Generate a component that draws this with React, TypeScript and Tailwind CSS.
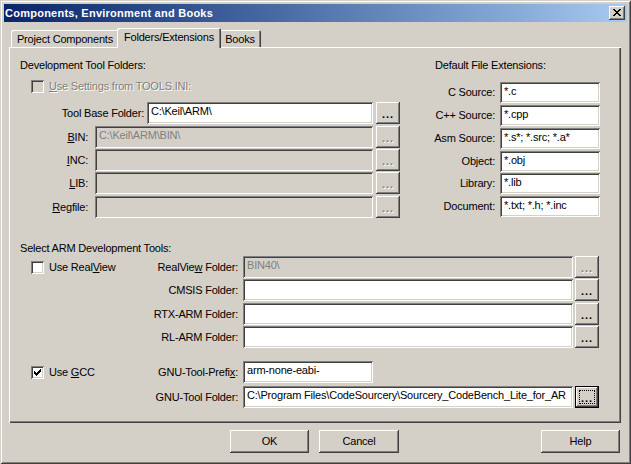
import React from "react";

const font = "[font-family:'Liberation_Sans',Arial,sans-serif]";
const raised =
  "shadow-[inset_-1px_-1px_#404040,inset_1px_1px_#ffffff,inset_-2px_-2px_#808080,inset_2px_2px_#d4d0c8]";
const sunken =
  "shadow-[inset_1px_1px_#808080,inset_-1px_-1px_#ffffff,inset_2px_2px_#404040,inset_-2px_-2px_#d4d0c8]";
const etched = "text-[#808080] [text-shadow:1px_1px_0_#ffffff]";

type FieldProps = { value?: string; disabled?: boolean; className: string };

function Field({ value = "", disabled = false, className }: FieldProps) {
  return (
    <div
      className={`${className} ${sunken} ${
        disabled ? "bg-[#d4d0c8] text-[#808080]" : "bg-white text-black"
      } pl-[4px] pt-[3px] leading-[13px] overflow-hidden whitespace-nowrap`}
    >
      {value}
    </div>
  );
}

function Browse({
  className,
  disabled = false,
  focused = false,
}: {
  className: string;
  disabled?: boolean;
  focused?: boolean;
}) {
  const frame = focused
    ? "shadow-[inset_0_0_0_1px_#000000,inset_-2px_-2px_#404040,inset_2px_2px_#ffffff,inset_-3px_-3px_#808080]"
    : raised;
  return (
    <div
      className={`${className} relative w-[24px] h-[22px] bg-[#d4d0c8] ${frame} flex justify-center pt-[6px]`}
    >
      <span
        className={`font-bold text-[11px] leading-[13px] tracking-[1px] ${
          disabled ? etched : "text-black"
        }`}
      >
        ...
      </span>
      {focused && (
        <div className="absolute inset-[4px] border border-dotted border-black" />
      )}
    </div>
  );
}

function Check({ checked = false, disabled = false }: { checked?: boolean; disabled?: boolean }) {
  return (
    <div
      className={`w-[13px] h-[13px] shrink-0 ${sunken} ${
        disabled ? "bg-[#d4d0c8]" : "bg-white"
      } flex items-center justify-center`}
    >
      {checked && (
        <svg width="7" height="7" viewBox="0 0 7 7" shapeRendering="crispEdges">
          <path
            d="M6 0h1v1H6zM5 1h2v1H5zM0 2h1v1H0zM4 2h3v1H4zM0 3h2v1H0zM3 3h3v1H3zM0 4h5v1H0zM1 5h3v1H1zM2 6h1v1H2z"
            fill="#000"
          />
        </svg>
      )}
    </div>
  );
}

function Button({ className, children }: { className: string; children: React.ReactNode }) {
  return (
    <div
      className={`${className} h-[23px] bg-[#d4d0c8] ${raised} flex items-center justify-center`}
    >
      {children}
    </div>
  );
}

const toolRows = [
  {
    label: <>Tool Base Folder:</>,
    value: "C:\\Keil\\ARM\\",
    labelW: "w-[135px]",
    input: "ml-[3px] w-[226px]",
    mt: "mt-[9px]",
    on: true,
  },
  {
    label: (
      <>
        <u>B</u>IN:
      </>
    ),
    value: "C:\\Keil\\ARM\\BIN\\",
    labelW: "w-[79px]",
    input: "ml-[7px] w-[278px]",
    mt: "mt-[2px]",
    on: false,
  },
  {
    label: (
      <>
        <u>I</u>NC:
      </>
    ),
    value: "",
    labelW: "w-[79px]",
    input: "ml-[7px] w-[278px]",
    mt: "mt-[1px]",
    on: false,
  },
  {
    label: (
      <>
        <u>L</u>IB:
      </>
    ),
    value: "",
    labelW: "w-[79px]",
    input: "ml-[7px] w-[278px]",
    mt: "mt-[1px]",
    on: false,
  },
  {
    label: (
      <>
        <u>R</u>egfile:
      </>
    ),
    value: "",
    labelW: "w-[79px]",
    input: "ml-[7px] w-[278px]",
    mt: "mt-[2px]",
    on: false,
  },
];

const extRows = [
  { label: "C Source:", value: "*.c", mt: "mt-[10px]" },
  { label: "C++ Source:", value: "*.cpp", mt: "mt-[2px]" },
  { label: "Asm Source:", value: "*.s*; *.src; *.a*", mt: "mt-[2px]" },
  { label: "Object:", value: "*.obj", mt: "mt-[2px]" },
  { label: "Library:", value: "*.lib", mt: "mt-[1px]" },
  { label: "Document:", value: "*.txt; *.h; *.inc", mt: "mt-[2px]" },
];

const armRows = [
  {
    check: (
      <>
        Use Real<u>V</u>iew
      </>
    ),
    label: (
      <>
        RealVie<u>w</u> Folder:
      </>
    ),
    value: "BIN40\\",
    disabled: true,
    mt: "mt-[1px]",
  },
  { check: null, label: <>CMSIS Folder:</>, value: "", disabled: false, mt: "mt-[1px]" },
  { check: null, label: <>RTX-ARM Folder:</>, value: "", disabled: false, mt: "mt-[2px]" },
  { check: null, label: <>RL-ARM Folder:</>, value: "", disabled: false, mt: "mt-[1px]" },
];

export default function App() {
  return (
    <div
      className={`w-[631px] h-[464px] bg-[#d4d0c8] ${font} text-[11px] leading-[13px] tracking-[-0.2px] text-black shadow-[inset_1px_1px_#d4d0c8,inset_-1px_-1px_#404040,inset_2px_2px_#ffffff,inset_-2px_-2px_#808080] flex flex-col overflow-hidden select-none`}
    >
      {/* title bar */}
      <div className="mt-[4px] ml-[4px] w-[623px] h-[18px] shrink-0 bg-linear-to-r from-[#0a246a] to-[#a6caf0] flex items-start">
        <span className="ml-[1px] text-white font-bold text-[11px] leading-[18px] tracking-[0.25px]">
          Components, Environment and Books
        </span>
        <div className={`ml-auto mr-[2px] mt-[2px] w-[16px] h-[14px] bg-[#d4d0c8] ${raised} flex items-start`}>
          <svg
            className="ml-[4px] mt-[3px]"
            width="8"
            height="7"
            viewBox="0 0 8 7"
            shapeRendering="crispEdges"
          >
            <path
              d="M0 0h2v1H0zM6 0h2v1H6zM1 1h2v1H1zM5 1h2v1H5zM2 2h4v1H2zM3 3h2v1H3zM2 4h4v1H2zM1 5h2v1H1zM5 5h2v1H5zM0 6h2v1H0zM6 6h2v1H6z"
              fill="#000"
            />
          </svg>
        </div>
      </div>

      {/* tabs */}
      <div className="mt-[6px] ml-[11px] h-[19px] shrink-0 flex items-end">
        <div className="w-[108px] h-[17px] rounded-t-[2px] shadow-[inset_1px_1px_#ffffff,inset_-1px_0_#404040,inset_-2px_0_#808080] flex justify-center pt-[3px]">
          Project Components
        </div>
        <div className="relative z-10 -mx-[2px] -mb-[1px] w-[104px] h-[20px] bg-[#d4d0c8] rounded-t-[2px] shadow-[inset_1px_1px_#ffffff,inset_-1px_0_#404040,inset_-2px_0_#808080] flex justify-center pt-[3px]">
          Folders/Extensions
        </div>
        <div className="w-[42px] h-[17px] rounded-t-[2px] shadow-[inset_1px_1px_#ffffff,inset_-1px_0_#404040,inset_-2px_0_#808080] flex justify-center pt-[3px]">
          Books
        </div>
      </div>

      {/* tab page */}
      <div className="ml-[9px] w-[612px] h-[376px] shrink-0 shadow-[inset_1px_1px_#ffffff,inset_-1px_-1px_#404040,inset_-2px_-2px_#808080] flex flex-col">
        <div className="flex">
          {/* folders */}
          <div className="w-[400px] flex flex-col">
            <div className="mt-[12px] ml-[11px] h-[13px]">Development Tool Folders:</div>
            <div className="mt-[8px] ml-[22px] h-[13px] flex items-center">
              <Check disabled />
              <span className={`ml-[5px] ${etched}`}>
                <u>U</u>se Settings from TOOLS.INI:
              </span>
            </div>
            {toolRows.map((r, i) => (
              <div key={i} className={`${r.mt} h-[22px] flex items-center`}>
                <div className={`${r.labelW} text-right whitespace-nowrap`}>{r.label}</div>
                <Field className={`${r.input} h-[22px]`} value={r.value} disabled={!r.on} />
                <Browse className="ml-[3px]" disabled={!r.on} />
              </div>
            ))}
          </div>

          {/* extensions */}
          <div className="flex flex-col">
            <div className="mt-[12px] ml-[26px] h-[13px]">Default File Extensions:</div>
            {extRows.map((r) => (
              <div key={r.label} className={`${r.mt} h-[21px] flex items-center`}>
                <div className="w-[86px] text-right whitespace-nowrap">{r.label}</div>
                <Field className="ml-[5px] w-[100px] h-[21px]" value={r.value} />
              </div>
            ))}
          </div>
        </div>

        <div className="mt-[24px] ml-[11px] h-[13px]">Select ARM Development Tools:</div>
        {armRows.map((r, i) => (
          <div key={i} className={`${r.mt} h-[22px] flex items-center`}>
            <div className="w-[229px] flex items-center whitespace-nowrap">
              {r.check && (
                <>
                  <div className="ml-[22px]">
                    <Check />
                  </div>
                  <span className="ml-[5px]">{r.check}</span>
                </>
              )}
              <span className="ml-auto">{r.label}</span>
            </div>
            <Field className="ml-[5px] w-[330px] h-[22px]" value={r.value} disabled={r.disabled} />
            <Browse className="ml-[2px]" disabled={r.disabled} />
          </div>
        ))}

        <div className="mt-[13px] h-[22px] flex items-center">
          <div className="w-[229px] flex items-center whitespace-nowrap">
            <div className="ml-[22px]">
              <Check checked />
            </div>
            <span className="ml-[5px]">
              Use <u>G</u>CC
            </span>
            <span className="ml-auto">
              GNU-Tool-Prefi<u>x</u>:
            </span>
          </div>
          <Field className="ml-[5px] w-[130px] h-[22px]" value="arm-none-eabi-" />
        </div>
        <div className="mt-[3px] h-[22px] flex items-center">
          <div className="w-[229px] text-right whitespace-nowrap">GNU-Tool Folder:</div>
          <Field
            className="ml-[5px] w-[330px] h-[22px]"
            value="C:\Program Files\CodeSourcery\Sourcery_CodeBench_Lite_for_AR"
          />
          <Browse className="ml-[2px]" focused />
        </div>
      </div>

      {/* dialog buttons */}
      <div className="mt-[7px] h-[23px] flex">
        <Button className="ml-[230px] w-[79px]">OK</Button>
        <Button className="ml-[10px] w-[80px]">Cancel</Button>
        <Button className="ml-[142px] w-[79px]">Help</Button>
      </div>
    </div>
  );
}
